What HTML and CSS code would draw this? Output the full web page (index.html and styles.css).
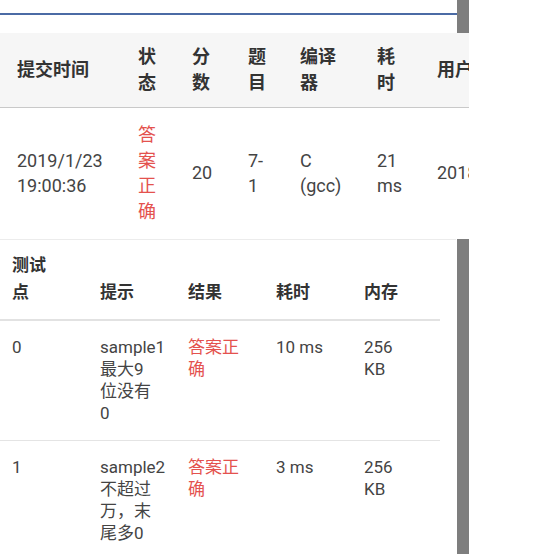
FILE: index.html
```html
<!DOCTYPE html>
<html lang="zh-CN">
<head>
<meta charset="utf-8">
<title>提交详情</title>
<link rel="stylesheet" href="styles.css">
</head>
<body>
<div class="page">
  <div class="top">
    <div class="top-main"><div class="top-line"></div></div>
    <div class="thumb thumb-top"></div>
  </div>

  <div class="sub-wrap">
    <table class="sub-table">
      <colgroup>
        <col class="c1"><col class="c2"><col class="c3"><col class="c4"><col class="c5"><col class="c6"><col class="c7">
      </colgroup>
      <thead>
        <tr>
          <th>提交时间</th>
          <th>状态</th>
          <th>分数</th>
          <th>题目</th>
          <th>编译器</th>
          <th>耗时</th>
          <th>用户</th>
        </tr>
      </thead>
      <tbody>
        <tr>
          <td>2019/1/23 19:00:36</td>
          <td class="ok">答案正确</td>
          <td>20</td>
          <td>7-<br>1</td>
          <td>C (gcc)</td>
          <td>21 ms</td>
          <td>201806030112</td>
        </tr>
      </tbody>
    </table>
  </div>

  <div class="cases">
    <div class="cases-card">
      <table class="case-table">
        <colgroup>
          <col class="k"><col class="k"><col class="k"><col class="k"><col class="k">
        </colgroup>
        <thead>
          <tr>
            <th class="narrow">测试点</th>
            <th>提示</th>
            <th>结果</th>
            <th>耗时</th>
            <th class="narrow">内存</th>
          </tr>
        </thead>
        <tbody>
          <tr>
            <td class="narrow">0</td>
            <td>sample1 最大9位没有0</td>
            <td class="ok">答案正确</td>
            <td>10 ms</td>
            <td class="narrow">256 KB</td>
          </tr>
          <tr>
            <td class="narrow">1</td>
            <td>sample2 不超过万，末尾多0</td>
            <td class="ok">答案正确</td>
            <td>3 ms</td>
            <td class="narrow">256 KB</td>
          </tr>
        </tbody>
      </table>
    </div>
    <div class="thumb thumb-side"></div>
  </div>
</div>
</body>
</html>
```

FILE: styles.css
```css
html, body {
  margin: 0;
  padding: 0;
  background: #ffffff;
}

body {
  font-family: Roboto, "Noto Sans CJK SC", sans-serif;
  font-size: 17px;
  color: #444444;
  width: 554px;
  height: 554px;
  overflow: hidden;
}

.page {
  display: flex;
  flex-direction: column;
  width: 554px;
}

/* top strip */
.top {
  display: flex;
  height: 33px;
}

.top-main {
  width: 457px;
  height: 33px;
  background: #ffffff;
}

.top-line {
  height: 13px;
  border-bottom: 2px solid #4b6ba5;
}

.thumb {
  width: 12px;
  background: #7e7e7e;
}

.thumb-top {
  height: 33px;
}

/* submission table */
.sub-wrap {
  width: 469px;
  overflow: hidden;
}

.sub-table {
  table-layout: fixed;
  width: 572px;
  border-collapse: collapse;
  border-spacing: 0;
  font-size: 18px;
}

.sub-table .c1 { width: 121px; }
.sub-table .c2 { width: 54px; }
.sub-table .c3 { width: 56px; }
.sub-table .c4 { width: 52px; }
.sub-table .c5 { width: 77px; }
.sub-table .c6 { width: 60px; }
.sub-table .c7 { width: 152px; }

.sub-table th,
.sub-table td {
  padding: 14px 15px 14px 17px;
  text-align: left;
  vertical-align: middle;
  line-height: 25.5px;
}

.sub-table th {
  padding-top: 11px;
  padding-bottom: 12px;
  background: #f6f6f6;
  border-bottom: 1px solid #c9c9c9;
  font-weight: 700;
  color: #333333;
}

.sub-table td {
  height: 102px;
}

.sub-table td:last-child,
.sub-table th:last-child {
  white-space: nowrap;
}

.ok {
  color: #e4524e;
}

/* test cases */
.cases {
  display: flex;
  align-items: stretch;
  margin-top: 1px;
  height: 320px;
}

.cases-card {
  width: 456px;
  margin-right: 1px;
  background: #ffffff;
  border-top: 1px solid #ececec;
}

.thumb-side {
  height: 320px;
}

.case-table {
  table-layout: fixed;
  width: 440px;
  border-collapse: collapse;
  border-spacing: 0;
}

.case-table .k { width: 88px; }

.case-table th,
.case-table td {
  padding: 15px 20px 16px 12px;
  text-align: left;
  vertical-align: top;
  line-height: 22px;
}

.case-table .narrow {
  padding-right: 36px;
}

.case-table th {
  padding-top: 12px;
  padding-bottom: 13px;
  vertical-align: bottom;
  font-weight: 700;
  color: #333333;
  line-height: 27px;
  border-bottom: 2px solid #e2e2e2;
}

.case-table td {
  border-bottom: 1px solid #e4e4e4;
}
```
